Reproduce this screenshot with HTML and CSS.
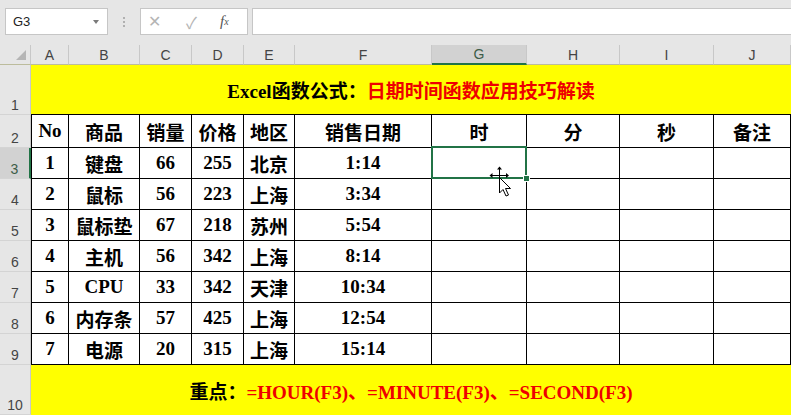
FILE: index.html
```html
<!DOCTYPE html>
<html lang="zh-CN">
<head>
<meta charset="UTF-8">
<title>Excel - 日期时间函数</title>
<link rel="stylesheet" href="styles.css">
</head>
<body>
<div class="toolbar">
    <div class="namebox"><span>G3</span><span class="caret"></span></div>
    <div class="grip"><i></i><i></i><i></i></div>
    <div class="fnbox">
        <span class="fn-x">✕</span>
        <span class="fn-ok">✓</span>
        <span class="fn-fx">f<sub>x</sub></span>
    </div>
    <div class="formula"></div>
</div>

<div class="sheet">
    <div class="corner"><span class="tri"></span></div>
    <div class="ch">A</div>
    <div class="ch">B</div>
    <div class="ch">C</div>
    <div class="ch">D</div>
    <div class="ch">E</div>
    <div class="ch">F</div>
    <div class="ch sel">G</div>
    <div class="ch">H</div>
    <div class="ch">I</div>
    <div class="ch">J</div>

    <div class="rh">1</div>
    <div class="title">Excel函数公式：<span class="red">日期时间函数应用技巧解读</span></div>

    <div class="rh">2</div>
    <div class="c first">No</div>
    <div class="c">商品</div>
    <div class="c">销量</div>
    <div class="c">价格</div>
    <div class="c">地区</div>
    <div class="c">销售日期</div>
    <div class="c">时</div>
    <div class="c">分</div>
    <div class="c">秒</div>
    <div class="c">备注</div>

    <div class="rh sel">3</div>
    <div class="c first">1</div>
    <div class="c">键盘</div>
    <div class="c">66</div>
    <div class="c">255</div>
    <div class="c">北京</div>
    <div class="c">1:14</div>
    <div class="c active">
        <div class="selbox"><span class="handle"></span></div>
        <svg class="cursor" width="26" height="32" viewBox="0 0 26 32">
            <g stroke="#000" stroke-width="1" fill="#000">
                <line x1="4" y1="9.5" x2="18" y2="9.5"/>
                <line x1="11.5" y1="3" x2="11.5" y2="12"/>
                <polygon points="1.5,9.5 4.5,7 4.5,12" stroke="none"/>
                <polygon points="21,9.5 18,7 18,12" stroke="none"/>
                <polygon points="11.5,0.5 9,3.5 14,3.5" stroke="none"/>
            </g>
            <polygon points="11.5,11.5 11.5,27 15,23.5 18,30 20.5,29 17.5,22.5 22.5,22.5"
                     fill="#fff" stroke="#000" stroke-width="1" stroke-linejoin="round"/>
        </svg>
    </div>
    <div class="c"></div>
    <div class="c"></div>
    <div class="c"></div>

    <div class="rh">4</div>
    <div class="c first">2</div>
    <div class="c">鼠标</div>
    <div class="c">56</div>
    <div class="c">223</div>
    <div class="c">上海</div>
    <div class="c">3:34</div>
    <div class="c"></div><div class="c"></div><div class="c"></div><div class="c"></div>

    <div class="rh">5</div>
    <div class="c first">3</div>
    <div class="c">鼠标垫</div>
    <div class="c">67</div>
    <div class="c">218</div>
    <div class="c">苏州</div>
    <div class="c">5:54</div>
    <div class="c"></div><div class="c"></div><div class="c"></div><div class="c"></div>

    <div class="rh">6</div>
    <div class="c first">4</div>
    <div class="c">主机</div>
    <div class="c">56</div>
    <div class="c">342</div>
    <div class="c">上海</div>
    <div class="c">8:14</div>
    <div class="c"></div><div class="c"></div><div class="c"></div><div class="c"></div>

    <div class="rh">7</div>
    <div class="c first">5</div>
    <div class="c">CPU</div>
    <div class="c">33</div>
    <div class="c">342</div>
    <div class="c">天津</div>
    <div class="c">10:34</div>
    <div class="c"></div><div class="c"></div><div class="c"></div><div class="c"></div>

    <div class="rh">8</div>
    <div class="c first">6</div>
    <div class="c">内存条</div>
    <div class="c">57</div>
    <div class="c">425</div>
    <div class="c">上海</div>
    <div class="c">12:54</div>
    <div class="c"></div><div class="c"></div><div class="c"></div><div class="c"></div>

    <div class="rh">9</div>
    <div class="c first">7</div>
    <div class="c">电源</div>
    <div class="c">20</div>
    <div class="c">315</div>
    <div class="c">上海</div>
    <div class="c">15:14</div>
    <div class="c"></div><div class="c"></div><div class="c"></div><div class="c"></div>

    <div class="rh">10</div>
    <div class="note">重点：<span class="red">=HOUR(F3)、=MINUTE(F3)、=SECOND(F3)</span></div>
</div>
</body>
</html>
```

FILE: styles.css
```css
html, body {
    margin: 0;
    padding: 0;
    overflow: hidden;
}
body {
    width: 791px;
    height: 415px;
    background-color: #e6e6e6;
    font-family: "Liberation Sans", Arial, sans-serif;
}

/* formula bar */
.toolbar {
    height: 45px;
    box-sizing: border-box;
    padding: 8px 0 0 5px;
    display: flex;
    align-items: flex-start;
}
.namebox {
    width: 103px;
    height: 27px;
    box-sizing: border-box;
    background: #fff;
    border: 1px solid #c6c6c6;
    display: flex;
    align-items: center;
    justify-content: space-between;
    padding: 0 7px 0 7px;
    font-size: 13px;
    color: #222;
}
.caret {
    width: 0;
    height: 0;
    border-left: 3px solid transparent;
    border-right: 3px solid transparent;
    border-top: 4px solid #7a7a7a;
    margin-right: 1px;
}
.grip {
    width: 32px;
    height: 27px;
    display: flex;
    flex-direction: column;
    align-items: center;
    justify-content: center;
    gap: 2px;
}
.grip i {
    display: block;
    width: 2px;
    height: 2px;
    background: #b0b0b0;
}
.fnbox {
    width: 108px;
    height: 27px;
    box-sizing: border-box;
    background: #fff;
    border: 1px solid #c6c6c6;
    display: flex;
    align-items: center;
    padding-left: 7px;
    color: #b4b4b4;
}
.fn-x {
    width: 38px;
    font-size: 16px;
    font-weight: 300;
}
.fn-ok {
    width: 34px;
    font-size: 16px;
}
.fn-fx {
    font-family: "Liberation Serif", serif;
    font-style: italic;
    font-size: 15px;
    color: #555;
}
.fn-fx sub {
    font-size: 10px;
    vertical-align: 1px;
}
.formula {
    flex: 1;
    height: 27px;
    margin-left: 4px;
    box-sizing: border-box;
    background: #fff;
    border: 1px solid #c6c6c6;
    border-right: none;
}

/* sheet grid */
.sheet {
    display: grid;
    grid-template-columns: 31px 38px 71px 52px 52px 51px 137px 95px 93px 94px 77px;
    grid-template-rows: 20px 50px 33px repeat(7, 31px) 50px;
    background: #fff;
}
.corner, .ch, .rh {
    box-sizing: border-box;
    background: #e6e6e6;
    color: #444;
    font-size: 14px;
}
.corner {
    position: relative;
    border-right: 1px solid #c8c8c8;
    border-bottom: 1px solid #bcbc9c;
}
.tri {
    position: absolute;
    right: 4px;
    bottom: 4px;
    width: 0;
    height: 0;
    border-left: 10px solid transparent;
    border-bottom: 10px solid #b5b5b5;
}
.ch {
    border-right: 1px solid #c8c8c8;
    border-bottom: 1px solid #bcbc9c;
    display: flex;
    align-items: center;
    justify-content: center;
}
.ch.sel {
    background: #d2d2d2;
    border-bottom: 2px solid #217346;
    color: #3d5c48;
}
.rh {
    border-right: 1px solid #c8c8c8;
    border-bottom: 1px solid #d4d4d4;
    display: flex;
    align-items: flex-end;
    justify-content: center;
    padding-bottom: 1px;
}
.rh.sel {
    background: #d2d2d2;
    border-right: 2px solid #217346;
    color: #3d5c48;
}

.c, .title, .note {
    box-sizing: border-box;
    display: flex;
    align-items: center;
    justify-content: center;
    font-family: "Liberation Serif", "Noto Sans CJK SC", serif;
    font-weight: bold;
    font-size: 19px;
    color: #000;
    white-space: nowrap;
}
.c {
    border-right: 1px solid #000;
    border-bottom: 1px solid #000;
    background: #fff;
}
.c.first {
    border-left: 1px solid #000;
}
.title, .note {
    grid-column: span 10;
    background: #ffff00;
}
.title {
    border-bottom: 1px solid #000;
}
.red {
    color: #ee0000;
}

/* active cell */
.active {
    position: relative;
}
.selbox {
    position: absolute;
    top: -2px;
    left: -1px;
    right: -1px;
    bottom: -1px;
    border: 2px solid #217346;
}
.handle {
    position: absolute;
    right: -5px;
    bottom: -5px;
    width: 5px;
    height: 5px;
    background: #217346;
    border: 1px solid #fff;
}
.cursor {
    position: absolute;
    left: 56px;
    top: 18px;
}
```
